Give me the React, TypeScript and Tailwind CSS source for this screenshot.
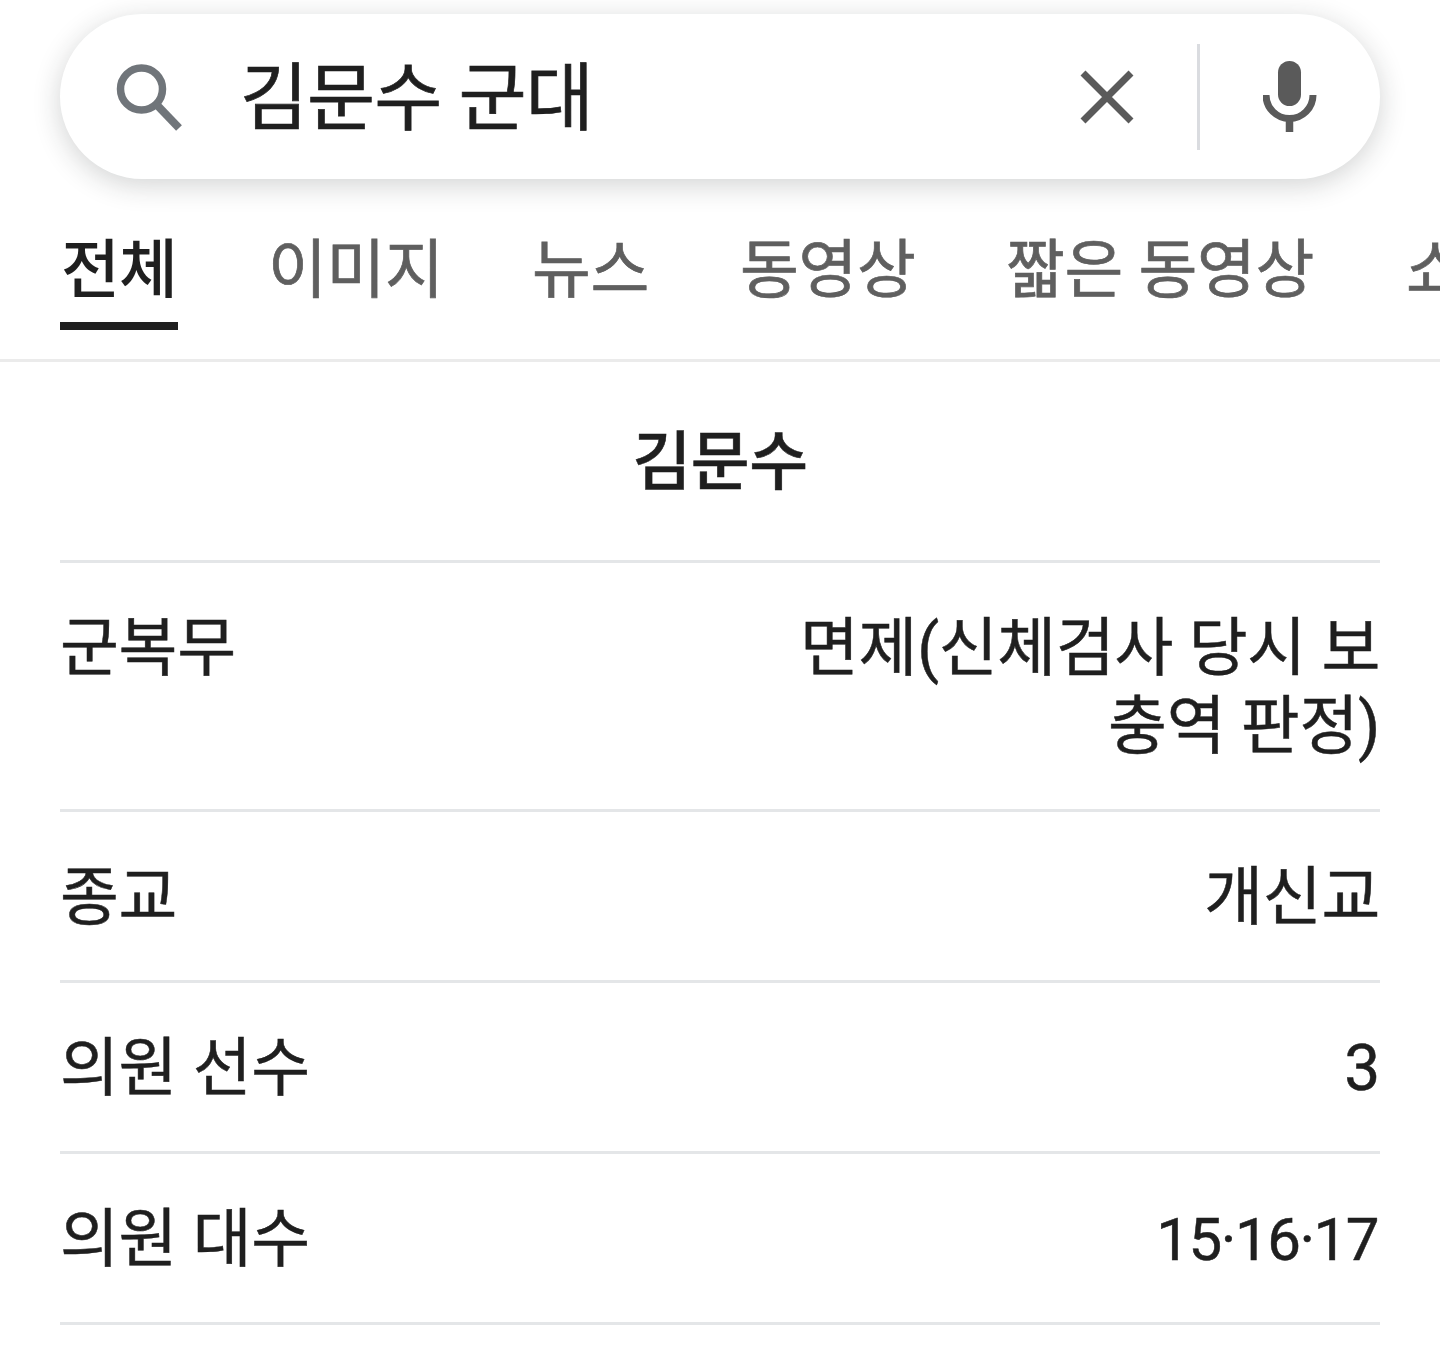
const font = { fontFamily: 'Roboto, "Noto Sans CJK KR", sans-serif' }

const tabs = [
  { label: '이미지', cls: 'w-[170px] -ml-[2px]' },
  { label: '뉴스', cls: 'w-[116px] ml-[2px]' },
  { label: '동영상', cls: 'w-[174px]' },
  { label: '짧은 동영상', cls: 'w-[308px]' },
]

const rows = [
  { label: '종교', value: '개신교' },
  { label: '의원 선수', value: '3' },
  { label: '의원 대수', value: '15·16·17' },
]

function SearchIcon() {
  return (
    <svg width="68" height="68" viewBox="0 0 68 68" fill="none" stroke="#70757a" strokeWidth="7.5">
      <circle cx="25.500" cy="26" r="21" />
      <path d="M40 41 L63 65" strokeWidth="8" />
    </svg>
  )
}

function CloseIcon() {
  return (
    <svg width="54" height="54" viewBox="0 0 54 54" fill="none" stroke="#5a5a5a" strokeWidth="7">
      <path d="M3 3 L51 51 M51 3 L3 51" />
    </svg>
  )
}

function MicIcon() {
  return (
    <svg width="54" height="72" viewBox="0 0 54 72" fill="none">
      <rect x="15" y="0" width="23" height="45" rx="11.500" fill="#5a5a5a" />
      <path d="M3 34 A23.500 23.500 0 0 0 50 34" stroke="#5a5a5a" strokeWidth="7" />
      <path d="M26.500 58 V71" stroke="#5a5a5a" strokeWidth="7.500" />
    </svg>
  )
}

export default function App() {
  return (
    <div className="h-[1356px] w-[1440px] overflow-hidden bg-white text-[#1f1f1f]" style={font}>
      <div className="px-[60px] pt-[14px]">
        <div className="flex h-[165px] items-center rounded-[83px] bg-white pl-[56px] pr-[63px] shadow-[0_6px_28px_rgba(32,33,36,0.2)]">
          <SearchIcon />
          <div className="ml-[56px] mt-[4px] flex-1 text-[74px] leading-none tracking-[-1px] [-webkit-text-stroke:0.7px_#1f1f1f]">김문수 군대</div>
          <CloseIcon />
          <div className="ml-[63px] mr-[63px] h-[106px] w-[3px] bg-[#dadce0]" />
          <MicIcon />
        </div>
      </div>

      <div className="mt-[41px] flex h-[142px] overflow-hidden border-b-[3px] border-[#ebebeb] pl-[60px]">
        <div className="mr-[92px] flex h-[110px] w-[118px] shrink-0 flex-col items-center border-b-[8px] border-[#1f1f1f] pt-[7px]">
          <span className="text-[64px] font-medium leading-[88px] tracking-[-1px] whitespace-nowrap">전체</span>
        </div>
        {tabs.map((t) => (
          <div key={t.label} className={`${t.cls} mr-[92px] shrink-0 pt-[7px] text-[64px] leading-[88px] tracking-[-0.4px] whitespace-nowrap text-[#5f5f5f] [-webkit-text-stroke:0.7px_#5f5f5f]`}>
            {t.label}
          </div>
        ))}
        <div className="shrink-0 pt-[7px] text-[64px] leading-[88px] tracking-[-0.4px] whitespace-nowrap text-[#5f5f5f] [-webkit-text-stroke:0.7px_#5f5f5f]">쇼</div>
      </div>

      <div className="px-[60px] [-webkit-text-stroke:0.5px_#1f1f1f]">
        <div className="flex h-[201px] items-center justify-center border-b-[3px] border-[#e4e6e8] pt-[4px] text-[64px] font-medium leading-none tracking-[-0.5px]">
          김문수
        </div>
        <div className="flex h-[249px] justify-between border-b-[3px] border-[#e4e6e8] pt-[47px] text-[64px] leading-[78px] tracking-[-0.3px]">
          <span>군복무</span>
          <span className="w-[590px] text-right">면제(신체검사 당시 보충역 판정)</span>
        </div>
        {rows.map((r) => (
          <div key={r.label} className="flex h-[171px] items-center justify-between border-b-[3px] border-[#e4e6e8] pt-[4px] text-[64px] leading-[78px] tracking-[-0.3px]">
            <span>{r.label}</span>
            <span className={r.value === '15·16·17' ? 'mr-[2px] text-[60px] tracking-[-1.5px]' : ''}>{r.value}</span>
          </div>
        ))}
      </div>
    </div>
  )
}
